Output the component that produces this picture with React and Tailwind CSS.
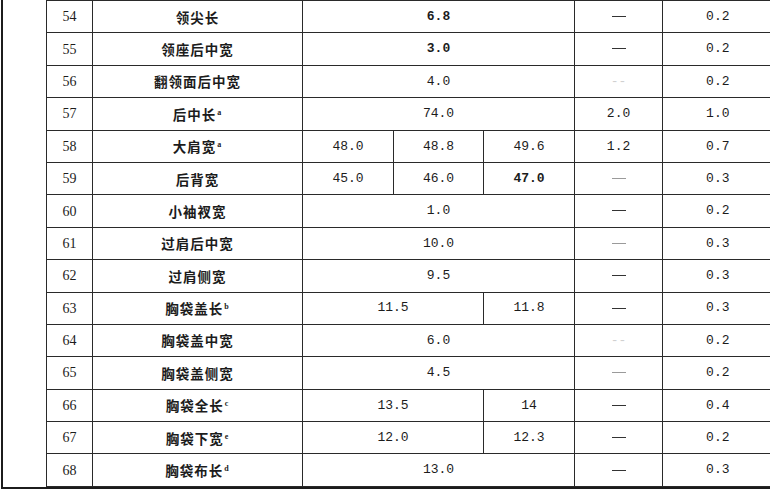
import React from 'react';

const rows = [
	{ no: 54, name: '领尖长', cells: [{ v: '6.8', span: 3, bold: true }], tol: '—', dev: '0.2' },
	{ no: 55, name: '领座后中宽', cells: [{ v: '3.0', span: 3, bold: true }], tol: '—', dev: '0.2' },
	{ no: 56, name: '翻领面后中宽', cells: [{ v: '4.0', span: 3 }], tol: '', dev: '0.2', faint: true },
	{ no: 57, name: '后中长', sup: 'a', cells: [{ v: '74.0', span: 3 }], tol: '2.0', dev: '1.0' },
	{ no: 58, name: '大肩宽', sup: 'a', cells: [{ v: '48.0' }, { v: '48.8' }, { v: '49.6' }], tol: '1.2', dev: '0.7' },
	{ no: 59, name: '后背宽', cells: [{ v: '45.0' }, { v: '46.0' }, { v: '47.0', bold: true }], tol: '—', dev: '0.3', faint: true },
	{ no: 60, name: '小袖衩宽', cells: [{ v: '1.0', span: 3 }], tol: '—', dev: '0.2' },
	{ no: 61, name: '过肩后中宽', cells: [{ v: '10.0', span: 3 }], tol: '—', dev: '0.3', faint: true },
	{ no: 62, name: '过肩侧宽', cells: [{ v: '9.5', span: 3 }], tol: '—', dev: '0.3' },
	{ no: 63, name: '胸袋盖长', sup: 'b', cells: [{ v: '11.5', span: 2 }, { v: '11.8' }], tol: '—', dev: '0.3' },
	{ no: 64, name: '胸袋盖中宽', cells: [{ v: '6.0', span: 3 }], tol: '', dev: '0.2', faint: true },
	{ no: 65, name: '胸袋盖侧宽', cells: [{ v: '4.5', span: 3 }], tol: '—', dev: '0.2', faint: true },
	{ no: 66, name: '胸袋全长', sup: 'c', cells: [{ v: '13.5', span: 2 }, { v: '14' }], tol: '—', dev: '0.4' },
	{ no: 67, name: '胸袋下宽', sup: 'e', cells: [{ v: '12.0', span: 2 }, { v: '12.3' }], tol: '—', dev: '0.2' },
	{ no: 68, name: '胸袋布长', sup: 'd', cells: [{ v: '13.0', span: 3 }], tol: '—', dev: '0.3' },
];

const cell = 'border border-[#2a2a2a] text-center align-middle p-0';
const num = "font-['Liberation_Mono',monospace] text-[13px]";

export default function App() {
	return (
		<div className="w-[770px] h-[490px] bg-white overflow-hidden text-[#1c1c1c]">
			<div className="ml-[1px] h-[489px] border-l-2 border-b-2 border-[#1c1c1c] pl-[43px]">
				<table className="table-fixed border-collapse w-[726px] h-[487px]">
					<colgroup>
						<col className="w-[46px]" />
						<col className="w-[210px]" />
						<col className="w-[91px]" />
						<col className="w-[90px]" />
						<col className="w-[91px]" />
						<col className="w-[88px]" />
						<col className="w-[110px]" />
					</colgroup>
					<tbody>
						{rows.map((r) => (
							<tr key={r.no} className="h-[32.4px]">
								<td className={`${cell} font-['Liberation_Serif',serif] text-[14px]`}>{r.no}</td>
								<td className={`${cell} font-['Noto_Sans_CJK_SC',sans-serif] text-[13.5px] font-semibold tracking-[1px]`}>
									{r.name}
									{r.sup && <sup className="text-[8px] font-['Liberation_Serif',serif] -top-[0.6em] ml-[1px]">{r.sup}</sup>}
								</td>
								{r.cells.map((c, i) => (
									<td key={i} colSpan={c.span || 1} className={`${cell} ${num} ${c.bold ? 'font-bold' : ''}`}>
										{c.v}
									</td>
								))}
								<td className={`${cell} ${num}`}>
									{r.tol === '—' ? (
										<span className={`inline-block w-[14px] h-[1px] align-middle ${r.faint ? 'bg-[#9a9a9a]' : 'bg-[#333]'}`} />
									) : r.tol ? (
										r.tol
									) : (
										<span className="text-[#d0d0d0]">--</span>
									)}
								</td>
								<td className={`${cell} ${num} border-r-0`}>{r.dev}</td>
							</tr>
						))}
					</tbody>
				</table>
			</div>
		</div>
	);
}
